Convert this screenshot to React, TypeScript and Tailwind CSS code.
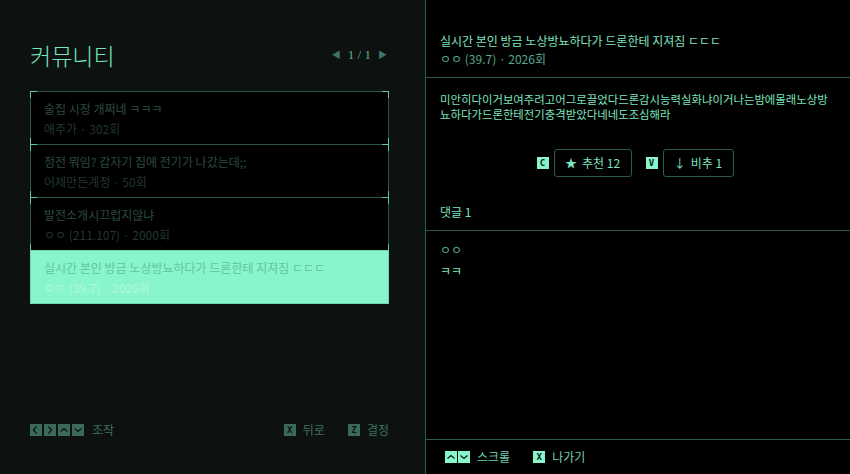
import React from 'react';

const FONT = { fontFamily: '"Noto Sans CJK KR", "Noto Sans", sans-serif' };

interface Post {
  title: string;
  meta: string;
}

const posts: Post[] = [
  { title: '술집 시장 개쩌네 ㅋㅋㅋ', meta: '애주가 · 302회' },
  { title: '정전 뭐임? 갑자기 집에 전기가 나갔는데;;', meta: '어제만든계정 · 50회' },
  { title: '발전소개시끄럽지않냐', meta: 'ㅇㅇ (211.107) · 2000회' },
  { title: '실시간 본인 방금 노상방뇨하다가 드론한테 지져짐 ㄷㄷㄷ', meta: 'ㅇㅇ (39.7) · 2026회' },
];

const Corners = () => (
  <>
    <span className="absolute -left-px -top-px h-[7px] w-[7px] border-l border-t border-[#5cc7a0]" />
    <span className="absolute -right-px -top-px h-[7px] w-[7px] border-r border-t border-[#5cc7a0]" />
    <span className="absolute -bottom-px -left-px h-[7px] w-[7px] border-b border-l border-[#5cc7a0]" />
    <span className="absolute -bottom-px -right-px h-[7px] w-[7px] border-b border-r border-[#5cc7a0]" />
  </>
);

const Key = ({ children, light = false }: { children: React.ReactNode; light?: boolean }) => (
  <span
    className={`flex h-[12px] w-[12px] items-center justify-center text-[9px] font-bold leading-none ${
      light ? 'bg-[#88f5cc] text-[#0a1a14]' : 'bg-[#3b6a5a] text-[#0e1513]'
    }`}
    style={{ fontFamily: '"DejaVu Sans Mono", monospace' }}
  >
    {children}
  </span>
);

const Chevron = ({ dir }: { dir: 'left' | 'right' | 'up' | 'down' }) => {
  const d = {
    left: 'M6.5 2.5 L3.5 6 L6.5 9.5',
    right: 'M4.5 2.5 L7.5 6 L4.5 9.5',
    up: 'M2.5 7.5 L6 4.5 L9.5 7.5',
    down: 'M2.5 4.5 L6 7.5 L9.5 4.5',
  }[dir];
  return (
    <svg width="12" height="12" viewBox="0 0 12 12">
      <path d={d} fill="none" stroke="currentColor" strokeWidth="1.3" />
    </svg>
  );
};

export default function App() {
  const selected = 3;

  return (
    <div className="flex h-[474px] w-[850px] overflow-hidden bg-black" style={FONT}>
      {/* left: post list */}
      <div className="flex h-full w-[425px] flex-col bg-[#0d1211] pl-[30px] pr-[36px]">
        <div className="mt-[42px] flex h-[26px] items-center justify-between">
          <h1 className="text-[23px] font-light leading-none text-[#74e6be]">커뮤니티</h1>
          <div className="mr-[2px] flex items-center gap-[7px] text-[13px]">
            <span className="text-[9px] text-[#3f7565]">◀</span>
            <span className="text-[#5fae92]" style={{ fontFamily: '"Liberation Serif", serif' }}>1 / 1</span>
            <span className="text-[9px] text-[#3f7565]">▶</span>
          </div>
        </div>

        <div className="mt-[23px] flex flex-col">
          {posts.map((post, i) => {
            const active = i === selected;
            return (
              <div
                key={i}
                className={`relative h-[54px] border border-[#2a5548] px-[13px] pt-[9px] ${
                  i > 0 ? '-mt-px' : ''
                } ${active ? 'border-[#6fd8b2] bg-[#88f5cc]' : 'bg-black'}`}
              >
                {!active && <Corners />}
                <div
                  className={`truncate text-[12px] leading-[16px] ${
                    active ? 'text-[#62c4a0]' : 'text-[#2c4a40]'
                  }`}
                >
                  {post.title}
                </div>
                <div
                  className={`mt-[4px] text-[12px] leading-[16px] ${
                    active ? 'text-[#b4f7de]' : 'text-[#21372f]'
                  }`}
                >
                  {post.meta}
                </div>
              </div>
            );
          })}
        </div>

        <div className="flex-1" />

        <div className="mb-[35px] flex items-center justify-between text-[12px] text-[#3e7060]">
          <div className="flex items-center">
            <div className="flex gap-[2px] text-[#0e1513]">
              {(['left', 'right', 'up', 'down'] as const).map((d) => (
                <span key={d} className="flex h-[12px] w-[12px] items-center justify-center bg-[#3b6a5a]">
                  <Chevron dir={d} />
                </span>
              ))}
            </div>
            <span className="ml-[8px]">조작</span>
          </div>
          <div className="flex items-center">
            <Key>X</Key>
            <span className="ml-[7px]">뒤로</span>
            <span className="ml-[23px]" />
            <Key>Z</Key>
            <span className="ml-[7px]">결정</span>
          </div>
        </div>
      </div>

      {/* right: post detail */}
      <div className="flex h-full flex-1 flex-col border-l border-[#2d5a4c] bg-black">
        <div className="border-b border-[#2d5a4c] px-[14px] pb-[10px] pt-[33px]">
          <div className="text-[12px] leading-[16px] text-[#7de3bf]">
            실시간 본인 방금 노상방뇨하다가 드론한테 지져짐 ㄷㄷㄷ
          </div>
          <div className="mt-[2px] text-[12px] leading-[16px] text-[#55a98c]">ㅇㅇ (39.7) · 2026회</div>
        </div>

        <div className="break-all pl-[14px] pr-[16px] pt-[14px] text-[11.4px] leading-[15px] text-[#7de3bf]">
          미안히다이거보여주려고어그로끌었다드론감시능력실화냐이거나는밤에몰래노상방뇨하다가드론한테전기충격받았다네네도조심해라
        </div>

        <div className="mt-[27px] flex items-center justify-center pr-[6px] text-[12px] text-[#7de3bf]">
          <Key light>C</Key>
          <div className="ml-[5px] flex h-[28px] w-[78px] items-center justify-center gap-[5px] rounded-[3px] border border-[#2d5a4c]">
            <span className="text-[12px]">★</span>
            <span>추천 12</span>
          </div>
          <span className="ml-[14px]" />
          <Key light>V</Key>
          <div className="ml-[5px] flex h-[28px] w-[71px] items-center justify-center gap-[5px] rounded-[3px] border border-[#2d5a4c]">
            <span>↓</span>
            <span>비추 1</span>
          </div>
        </div>

        <div className="mt-[27px] border-b border-[#2d5a4c] px-[14px] pb-[10px] text-[12px] leading-[16px] text-[#7de3bf]">
          댓글 1
        </div>

        <div className="px-[14px] pt-[11px] text-[12px] leading-[16px]">
          <div className="text-[#55a98c]">ㅇㅇ</div>
          <div className="mt-[5px] text-[#7de3bf]">ㅋㅋ</div>
        </div>

        <div className="flex-1" />

        <div className="flex h-[35px] items-center border-t border-[#2d5a4c] px-[19px] text-[12px] text-[#6fd0ae]">
          <div className="flex gap-[1px] text-[#0a1a14]">
            <span className="flex h-[12px] w-[12px] items-center justify-center bg-[#88f5cc]">
              <Chevron dir="up" />
            </span>
            <span className="flex h-[12px] w-[12px] items-center justify-center bg-[#88f5cc]">
              <Chevron dir="down" />
            </span>
          </div>
          <span className="ml-[7px]">스크롤</span>
          <span className="ml-[23px]" />
          <Key light>X</Key>
          <span className="ml-[7px]">나가기</span>
        </div>
      </div>
    </div>
  );
}
